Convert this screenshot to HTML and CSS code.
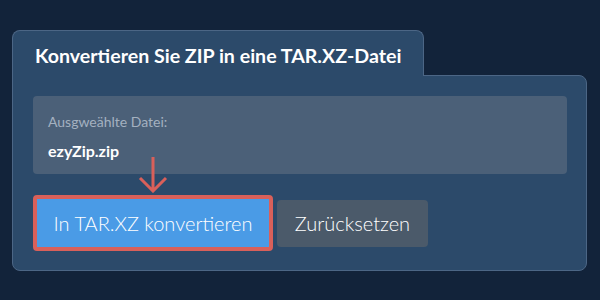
FILE: index.html
```html
<!DOCTYPE html>
<html lang="de">
<head>
  <meta charset="UTF-8" />
  <meta name="viewport" content="width=device-width, initial-scale=1.0"/>
  <title>ZIP in TAR.XZ</title>
  <link rel="stylesheet" href="styles.css">
</head>
<body>

  <div class="panel">
    <div class="panel-tab">
      <h1>Konvertieren Sie ZIP in eine TAR.XZ-Datei</h1>
    </div>
    <div class="panel-body">
      <div class="file-box">
        <div class="file-label">Ausgweählte Datei:</div>
        <div class="file-name">ezyZip.zip</div>
      </div>
      <div class="actions">
        <div class="convert-wrap">
          <svg class="hint-arrow" width="30" height="36" viewBox="0 0 30 36">
            <path d="M15 0 V34 M2 21 L15 34 L28 21" fill="none" stroke="#d9605a" stroke-width="3"/>
          </svg>
          <button class="convert-btn">In TAR.XZ konvertieren</button>
        </div>
        <button class="reset-btn">Zurücksetzen</button>
      </div>
    </div>
  </div>

</body>
</html>
```

FILE: styles.css
```css
body {
  font-family: Lato, "Open Sans", sans-serif;
  margin: 0;
  padding: 30px 13px 0 12px;
  background-color: #12233a;
  color: #fff;
}

.panel-tab {
  position: relative;
  box-sizing: border-box;
  width: 412px;
  height: 46px;
  padding: 0 0 0 22px;
  margin-bottom: -1px;
  background-color: #2c4a6a;
  border: 1px solid #4c6685;
  border-bottom: none;
  border-radius: 8px 8px 0 0;
  z-index: 1;
}

.panel-tab h1 {
  margin: 0;
  font-size: 19.6px;
  font-weight: bold;
  line-height: 50px;
  white-space: nowrap;
}

.panel-body {
  background-color: #2c4a6a;
  border: 1px solid #4c6685;
  border-radius: 0 8px 8px 8px;
  padding: 20px 19px 19px 20px;
}

.file-box {
  background-color: #4b6078;
  border-radius: 4px;
  height: 78px;
  padding: 0 15px;
  box-sizing: border-box;
}

.file-label {
  font-size: 14px;
  color: #a4b1c0;
  padding-top: 17px;
  line-height: 17px;
}

.file-name {
  font-size: 16px;
  font-weight: bold;
  margin-top: 11px;
}

.actions {
  display: flex;
  align-items: center;
  gap: 4px;
  margin-top: 21px;
}

.convert-wrap {
  position: relative;
}

.hint-arrow {
  position: absolute;
  left: 105px;
  top: -38px;
}

.convert-btn {
  width: 240px;
  height: 56px;
  font-family: Lato, sans-serif;
  font-size: 20px;
  font-weight: 300;
  color: #fff;
  background-color: #4a9be6;
  border: 4px solid #d9605a;
  border-radius: 4px;
  cursor: pointer;
}

.reset-btn {
  width: 151px;
  height: 47px;
  font-family: Lato, sans-serif;
  font-size: 20px;
  font-weight: 300;
  color: #fff;
  background-color: #4b5a6a;
  border: none;
  border-radius: 4px;
  cursor: pointer;
}
```
